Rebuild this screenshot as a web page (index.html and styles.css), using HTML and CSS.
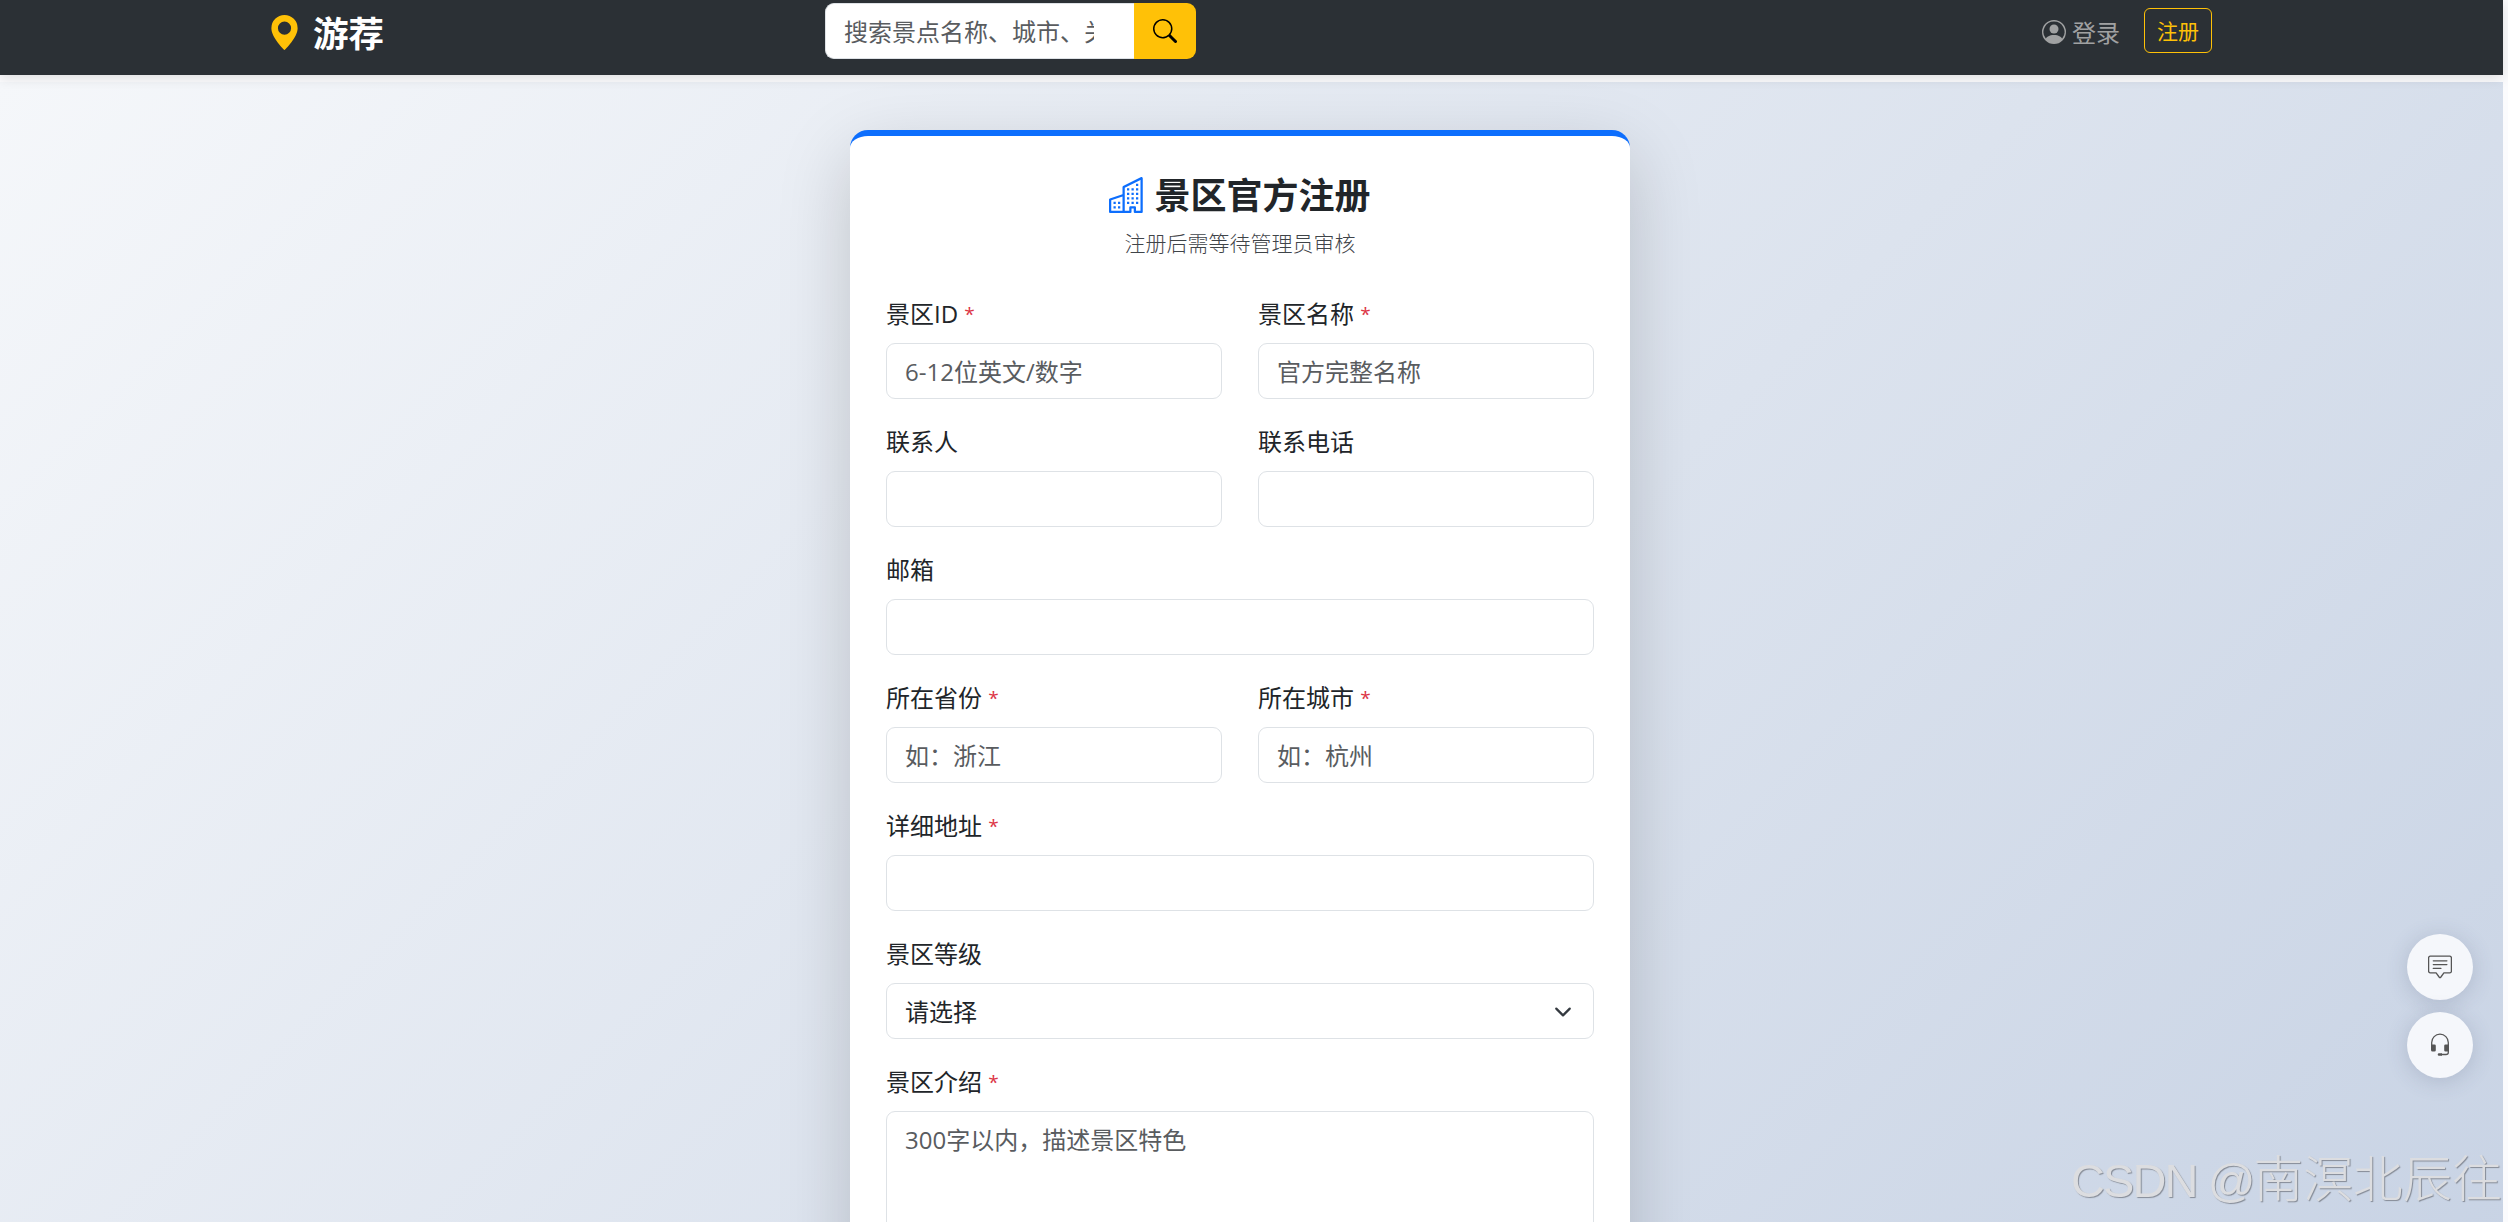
FILE: index.html
```html
<!DOCTYPE html>
<html lang="zh-CN">
<head>
<meta charset="utf-8">
<title>景区官方注册</title>
<link rel="stylesheet" href="styles.css">
</head>
<body>
<nav class="navbar">
  <a class="brand">
    <svg class="brand-icon" viewBox="0 0 16 16"><path d="M8 16s6-5.686 6-10A6 6 0 0 0 2 6c0 4.314 6 10 6 10m0-7a3 3 0 1 1 0-6 3 3 0 0 1 0 6"/></svg>
    <span>游荐</span>
  </a>
  <form class="search">
    <input class="search-input" placeholder="搜索景点名称、城市、关键词">
    <button class="search-btn" type="button"><svg class="icon" viewBox="0 0 16 16"><path d="M11.742 10.344a6.5 6.5 0 1 0-1.397 1.398h-.001q.044.06.098.115l3.85 3.85a1 1 0 0 0 1.415-1.414l-3.85-3.85a1 1 0 0 0-.115-.1zM12 6.5a5.5 5.5 0 1 1-11 0 5.5 5.5 0 0 1 11 0"/></svg></button>
  </form>
  <div class="account">
    <a class="login"><svg class="icon" viewBox="0 0 16 16"><path d="M11 6a3 3 0 1 1-6 0 3 3 0 0 1 6 0"/><path fill-rule="evenodd" d="M0 8a8 8 0 1 1 16 0A8 8 0 0 1 0 8m8-7a7 7 0 0 0-5.468 11.37C3.242 11.226 4.805 10 8 10s4.757 1.225 5.468 2.37A7 7 0 0 0 8 1"/></svg><span>登录</span></a>
    <a class="register">注册</a>
  </div>
</nav>
<main class="page">
  <section class="card">
    <h1 class="title"><svg class="title-icon" viewBox="0 0 16 16"><path fill-rule="evenodd" d="M14.763.075A.5.5 0 0 1 15 .5v15a.5.5 0 0 1-.5.5h-3a.5.5 0 0 1-.5-.5V14h-1v1.5a.5.5 0 0 1-.5.5h-9a.5.5 0 0 1-.5-.5V10a.5.5 0 0 1 .342-.474L6 7.64V4.5a.5.5 0 0 1 .276-.447l8-4a.5.5 0 0 1 .487.022M6 8.694 1 10.36V15h5zM7 15h2v-1.5a.5.5 0 0 1 .5-.5h2a.5.5 0 0 1 .5.5V15h2V1.309l-7 3.5z"/><path d="M2 11h1v1H2zm2 0h1v1H4zm-2 2h1v1H2zm2 0h1v1H4zm4-4h1v1H8zm2 0h1v1h-1zm-2 2h1v1H8zm2 0h1v1h-1zm2-2h1v1h-1zm0 2h1v1h-1zM8 7h1v1H8zm2 0h1v1h-1zm2 0h1v1h-1zM8 5h1v1H8zm2 0h1v1h-1zm2 0h1v1h-1zm0-2h1v1h-1z"/></svg><span>景区官方注册</span></h1>
    <p class="subtitle">注册后需等待管理员审核</p>
    <form class="form">
      <div class="field"><label class="label">景区ID <i class="req">*</i></label><input class="control" placeholder="6-12位英文/数字"></div>
      <div class="field"><label class="label">景区名称 <i class="req">*</i></label><input class="control" placeholder="官方完整名称"></div>
      <div class="field"><label class="label">联系人</label><input class="control"></div>
      <div class="field"><label class="label">联系电话</label><input class="control"></div>
      <div class="field wide"><label class="label">邮箱</label><input class="control"></div>
      <div class="field"><label class="label">所在省份 <i class="req">*</i></label><input class="control" placeholder="如：浙江"></div>
      <div class="field"><label class="label">所在城市 <i class="req">*</i></label><input class="control" placeholder="如：杭州"></div>
      <div class="field wide"><label class="label">详细地址 <i class="req">*</i></label><input class="control"></div>
      <div class="field wide"><label class="label">景区等级</label><div class="control select"><span>请选择</span><svg class="chevron" viewBox="0 0 16 16"><path d="m2 5 6 6 6-6"/></svg></div></div>
      <div class="field wide"><label class="label">景区介绍 <i class="req">*</i></label><textarea class="control area" placeholder="300字以内，描述景区特色"></textarea></div>
    </form>
  </section>
</main>
<aside class="floats">
  <button class="float-btn"><svg class="icon" viewBox="0 0 24 24" fill="none" stroke="currentColor" stroke-width="1.3" stroke-linecap="round" stroke-linejoin="round"><path d="M2.2 1.2h19.6a1.6 1.6 0 0 1 1.6 1.6v13.4a1.6 1.6 0 0 1-1.6 1.6h-5.9L12.9 22q-.9 1.2-1.8 0l-3-4.2H2.2a1.6 1.6 0 0 1-1.600-1.600V2.800a1.600 1.600 0 0 1 1.600-1.600zM5.300 5.800h13.600M5.300 9.600h13.600M5.300 13.400h7.600"/></svg></button>
  <button class="float-btn"><svg class="icon" viewBox="0 0 24 24" fill="none" stroke="currentColor" stroke-width="1.3" stroke-linecap="round"><path d="M3.700 12v-2.500a8.300 8.300 0 0 1 16.600 0v10q0 2-2.300 2h-4.500"/><path fill="currentColor" stroke="none" d="M3 11.500h3.500q1.300 0 1.300 1.200v4.600q0 1.200-1.300 1.200H4.500q-1.500 0-1.500-1.500zM21 11.500h-3.500q-1.300 0-1.300 1.200v4.600q0 1.200 1.300 1.200H21zM11 20.200h3v2.600h-3a1.300 1.300 0 0 1 0-2.600z"/></svg></button>
</aside>
<div class="watermark"><span class="wm-latin">CSDN @</span>南溟北辰往</div>
</body>
</html>
```
FILE: styles.css
```css
* { box-sizing: border-box; }
html { height: 100%; overflow: hidden; }
body {
  margin: 0;
  padding-right: 5px;
  height: 100%;
  overflow: hidden;
  display: flex;
  flex-direction: column;
  background: #fbfbfd;
  color: #212529;
  font: 400 24px/36px "Open Sans", "Noto Sans CJK SC", sans-serif;
}
input, textarea, button { font: inherit; color: inherit; outline: 0; }
.icon { width: 24px; height: 24px; fill: currentColor; flex: none; }
.float-btn .icon { fill: none; }

.navbar {
  flex: none;
  position: relative;
  height: 75px;
  padding: 0 291px 0 267px;
  display: grid;
  grid-template-columns: 558px 371px 1fr;
  align-items: start;
  background: #2b3035;
  box-shadow: 0 3px 12px rgba(0, 0, 0, .12);
}
.brand {
  display: flex;
  align-items: center;
  gap: 11px;
  height: 65px;
  color: #fff;
  font-size: 35.5px;
  font-weight: 700;
}
.brand span { padding-top: 1px; }
.brand-icon { width: 35px; height: 35px; fill: #ffc107; }
.search { display: flex; height: 56px; margin-top: 3px; }
.search-input {
  width: 309px;
  padding: 2px 40px 0 18px;
  border: 1px solid #dee2e6;
  border-right: 0;
  border-radius: 9px 0 0 9px;
  background: #fff;
}
.search-btn {
  width: 62px;
  padding: 0;
  display: flex;
  align-items: center;
  justify-content: center;
  border: 0;
  border-radius: 0 9px 9px 0;
  background: #ffc107;
  color: #000;
}
.account { display: flex; justify-content: flex-end; gap: 24px; padding-top: 8px; }
.login { display: flex; align-items: center; gap: 6px; height: 48px; color: #a0a1a2; }
.login span { padding-top: 2px; }
.register {
  width: 68px;
  height: 45px;
  border: 1px solid #ffc107;
  border-radius: 6px;
  color: #ffc107;
  font-size: 21px;
  line-height: 44px;
  text-align: center;
}

.page {
  flex: 1;
  min-height: 0;
  margin-top: 7px;
  padding: 48px 0 0 850px;
  overflow: hidden;
  background: linear-gradient(135deg, #f5f7fa 0%, #c3cfe2 100%) 0 0 / 100% 1600px;
}
.card {
  width: 780px;
  height: 1500px;
  padding: 36px;
  border-top: 6px solid #0d6efd;
  border-radius: 18px;
  background: #fff;
  box-shadow: 0 24px 72px rgba(0, 0, 0, .175);
}
.title {
  display: flex;
  align-items: center;
  justify-content: center;
  gap: 9px;
  height: 46px;
  margin: 0;
  font-size: 36px;
  font-weight: 700;
}
.title span { padding-top: 2px; }
.title-icon { width: 36px; height: 36px; fill: #0d6efd; }
.subtitle {
  margin: 9px 0 37px;
  color: #3f4449;
  font-size: 21px;
  font-weight: 300;
  line-height: 32px;
  text-align: center;
}
.form { display: grid; grid-template-columns: 1fr 1fr; gap: 24px 36px; }
.field { display: flex; flex-direction: column; gap: 11px; min-width: 0; }
.wide { grid-column: 1 / -1; }
.label { height: 36px; white-space: nowrap; }
.field { padding-top: 1px; }
.form { margin-top: -1px; }
.req { color: #dc3545; font-size: 19px; font-style: normal; vertical-align: 2px; line-height: 1; }
.control {
  width: 100%;
  height: 56px;
  padding: 1px 18px 0;
  border: 1px solid #dee2e6;
  border-radius: 9px;
  background: #fff;
}
::placeholder { color: #595c5f; opacity: 1; }
.select { display: flex; align-items: center; justify-content: space-between; }
.chevron {
  width: 18px;
  height: 18px;
  margin-right: 3px;
  fill: none;
  stroke: #343a40;
  stroke-width: 2;
  stroke-linecap: round;
  stroke-linejoin: round;
}
.area { display: block; height: 160px; padding: 10px 18px; resize: none; }

.floats { position: fixed; top: 934px; right: 35px; display: grid; gap: 12px; }
.float-btn {
  width: 66px;
  height: 66px;
  padding: 0;
  display: flex;
  align-items: center;
  justify-content: center;
  border: 0;
  border-radius: 50%;
  background: #f5f7fb;
  color: #555;
  box-shadow: 0 3px 22px rgba(60, 70, 100, .2);
}
.watermark {
  position: fixed;
  top: 1139px;
  left: 2071px;
  width: 437px;
  white-space: nowrap;
  color: #dcdde0;
  font: 300 49.7px/72px "Noto Sans CJK SC", sans-serif;
  text-shadow: 1px 1px 1px #858b96;
}
.wm-latin {
  font-family: "Liberation Sans", "Noto Sans CJK SC", sans-serif;
  font-size: 47px;
  letter-spacing: -1.9px;
}
```
